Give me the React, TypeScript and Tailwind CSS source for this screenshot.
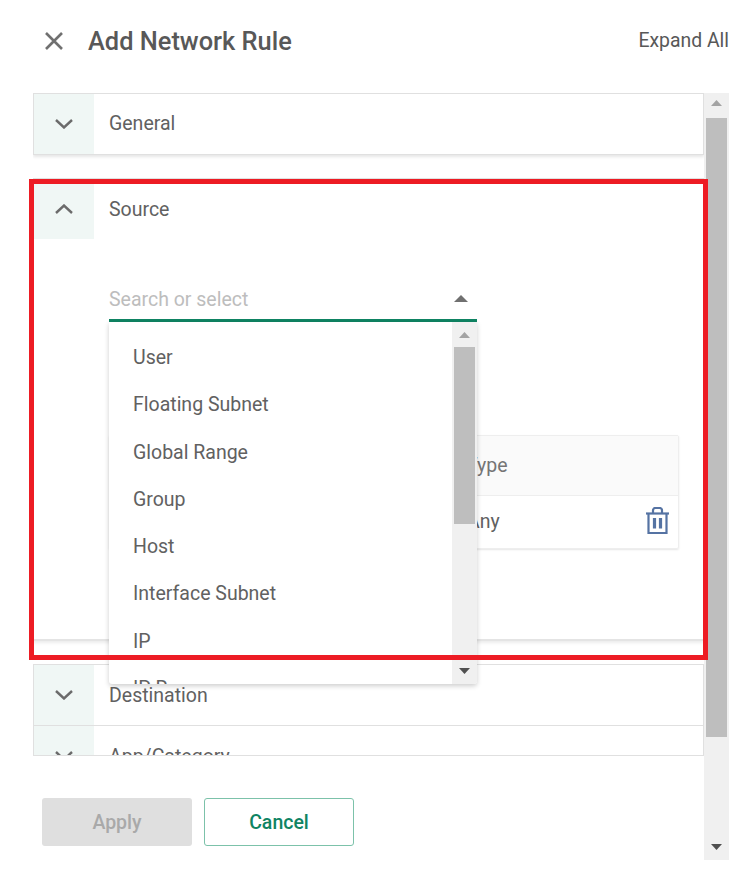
import React from 'react';

const Chevron = ({ up = false }: { up?: boolean }) => (
  <svg width="18" height="10" viewBox="0 0 18 10" fill="none" stroke="#6b6b6b" strokeWidth="2.4">
    <polyline points={up ? '1,9 9,1.5 17,9' : '1,1 9,8.5 17,1'} />
  </svg>
);

const Triangle = ({ up = false, w, h, color }: { up?: boolean; w: number; h: number; color: string }) => (
  <svg width={w} height={h} viewBox="0 0 10 10" preserveAspectRatio="none" fill={color}>
    <polygon points={up ? '5,0 10,10 0,10' : '0,0 10,0 5,10'} />
  </svg>
);

const Trash = () => (
  <svg width="23" height="27" viewBox="0 0 23 27" fill="none" stroke="#5573a3" strokeWidth="2.2">
    <path d="M0 6.5h23" />
    <path d="M7 6V3.5C7 2 8 1 9.5 1h4C15 1 16 2 16 3.5V6" />
    <path d="M2.5 6.5V26h18V6.5" />
    <path d="M8.5 11v10.5M14.5 11v10.5" strokeWidth="3.2" />
  </svg>
);

const Row = ({ label, up = false, labelClass = '' }: { label: string; up?: boolean; labelClass?: string }) => (
  <div className="flex h-[60px] shrink-0">
    <div className="flex w-[60px] shrink-0 items-center justify-center bg-[#f0f7f5]">
      <Chevron up={up} />
    </div>
    <div className={`flex items-center pl-[15px] text-[19.5px] text-[#616161] ${labelClass}`}>{label}</div>
  </div>
);

const options = ['User', 'Floating Subnet', 'Global Range', 'Group', 'Host', 'Interface Subnet', 'IP', 'IP Range'];

export default function App() {
  return (
    <div className="relative h-[874px] w-[736px] overflow-hidden bg-white font-['Roboto',sans-serif]">
      {/* Header */}
      <div className="flex h-[93px] items-start justify-between pt-[24px] pr-[7px]">
        <div className="flex items-center pl-[45px]">
          <svg width="18" height="18" viewBox="0 0 18 18" stroke="#707070" strokeWidth="2.6">
            <path d="M1 1l16 16M17 1L1 17" />
          </svg>
          <h1 className="ml-[25px] text-[25.4px] leading-[34px] font-medium text-[#585858]">Add Network Rule</h1>
        </div>
        <button className="mt-[1px] text-[19.4px] leading-[32px] text-[#585858]">Expand All</button>
      </div>

      <div className="flex pl-[33px]">
        <div className="w-[671px]">
          {/* Accordion list */}
          <div className="relative h-[663px] overflow-hidden border-b border-[#e0e0e0]">
            <div className="border border-[#e0e0e0] shadow-[0_2px_3px_rgba(0,0,0,0.1)]">
              <Row label="General" labelClass="pb-[1px]" />
            </div>

            <div className="mt-[23px] h-[463px] border-x border-t border-[#e0e0e0] border-b-2 border-b-[#e4e4e4] shadow-[0_2px_3px_rgba(0,0,0,0.08)]">
              <Row label="Source" up labelClass="pt-[2px]" />
              <div className="pl-[75px]">
                <div className="mt-[42px] flex h-[41px] w-[368px] items-center justify-between border-b-[3px] border-[#0f8463] pr-[9px] pb-[4px]">
                  <span className="pt-[4px] text-[19.5px] text-[#bdbdbd]">Search or select</span>
                  <Triangle up w={14} h={7} color="#707070" />
                </div>

                {/* Table behind the open dropdown */}
                <div className="mt-[113px] w-[570px] rounded-[2px] border border-[#eeeeee] shadow-[0_1px_2px_rgba(0,0,0,0.1)]">
                  <div className="flex h-[60px] items-center border-b border-[#eeeeee] bg-[#fafafa] pl-[356px] text-[19.5px] text-[#757575]">
                    Type
                  </div>
                  <div className="flex h-[52px] items-center justify-between pr-[9px] pb-[4px] pl-[357px] text-[19.5px] text-[#616161]">
                    <span className="pt-[4px]">Any</span>
                    <Trash />
                  </div>
                </div>
              </div>
            </div>

            <div className="mt-[23px] border border-[#e0e0e0]">
              <div className="border-b border-[#e0e0e0]">
                <Row label="Destination" labelClass="pt-[2px]" />
              </div>
              <Row label="App/Category" labelClass="pt-[2px]" />
            </div>
          </div>

          {/* Footer */}
          <div className="mt-[42px] flex gap-[12px] pl-[9px]">
            <button className="h-[48px] w-[150px] rounded-[3px] bg-[#dfdfdf] pt-[2px] text-[19.5px] font-medium text-[#a9a9a9]">
              Apply
            </button>
            <button className="h-[48px] w-[150px] rounded-[3px] border border-[#7cc2aa] bg-white pt-[2px] text-[19.5px] font-medium text-[#0f8463]">
              Cancel
            </button>
          </div>
        </div>

        {/* Main scrollbar */}
        <div className="flex h-[767px] w-[25px] flex-col items-center bg-[#f0f0f0]">
          <div className="flex h-[25px] shrink-0 items-center justify-center pb-[6px]">
            <Triangle up w={11} h={6} color="#a3a3a3" />
          </div>
          <div className="h-[619px] w-[21px] shrink-0 bg-[#bebebe]" />
          <div className="flex flex-1 items-end pb-[10px]">
            <Triangle w={11} h={6} color="#505050" />
          </div>
        </div>
      </div>

      {/* Open dropdown */}
      <div className="absolute top-[322px] left-[109px] flex h-[362px] w-[368px] overflow-hidden rounded-b-[3px] bg-white shadow-[0_2px_5px_rgba(0,0,0,0.2)]">
        <ul className="flex-1 pt-[12px]">
          {options.map((o) => (
            <li key={o} className="flex h-[47.25px] items-center pl-[24px] text-[19.5px] text-[#616161]">
              {o}
            </li>
          ))}
        </ul>
        <div className="flex w-[25px] flex-col items-center bg-[#f0f0f0]">
          <div className="flex h-[25px] shrink-0 items-center justify-center">
            <Triangle up w={11} h={6} color="#a3a3a3" />
          </div>
          <div className="h-[177px] w-[21px] shrink-0 bg-[#bebebe]" />
          <div className="flex flex-1 items-end pb-[10px]">
            <Triangle w={11} h={6} color="#505050" />
          </div>
        </div>
      </div>

      {/* Red highlight drawn over the screenshot */}
      <div className="pointer-events-none absolute top-[179px] left-[29px] h-[481px] w-[679px] border-[5px] border-[#ed1c24]" />
    </div>
  );
}
